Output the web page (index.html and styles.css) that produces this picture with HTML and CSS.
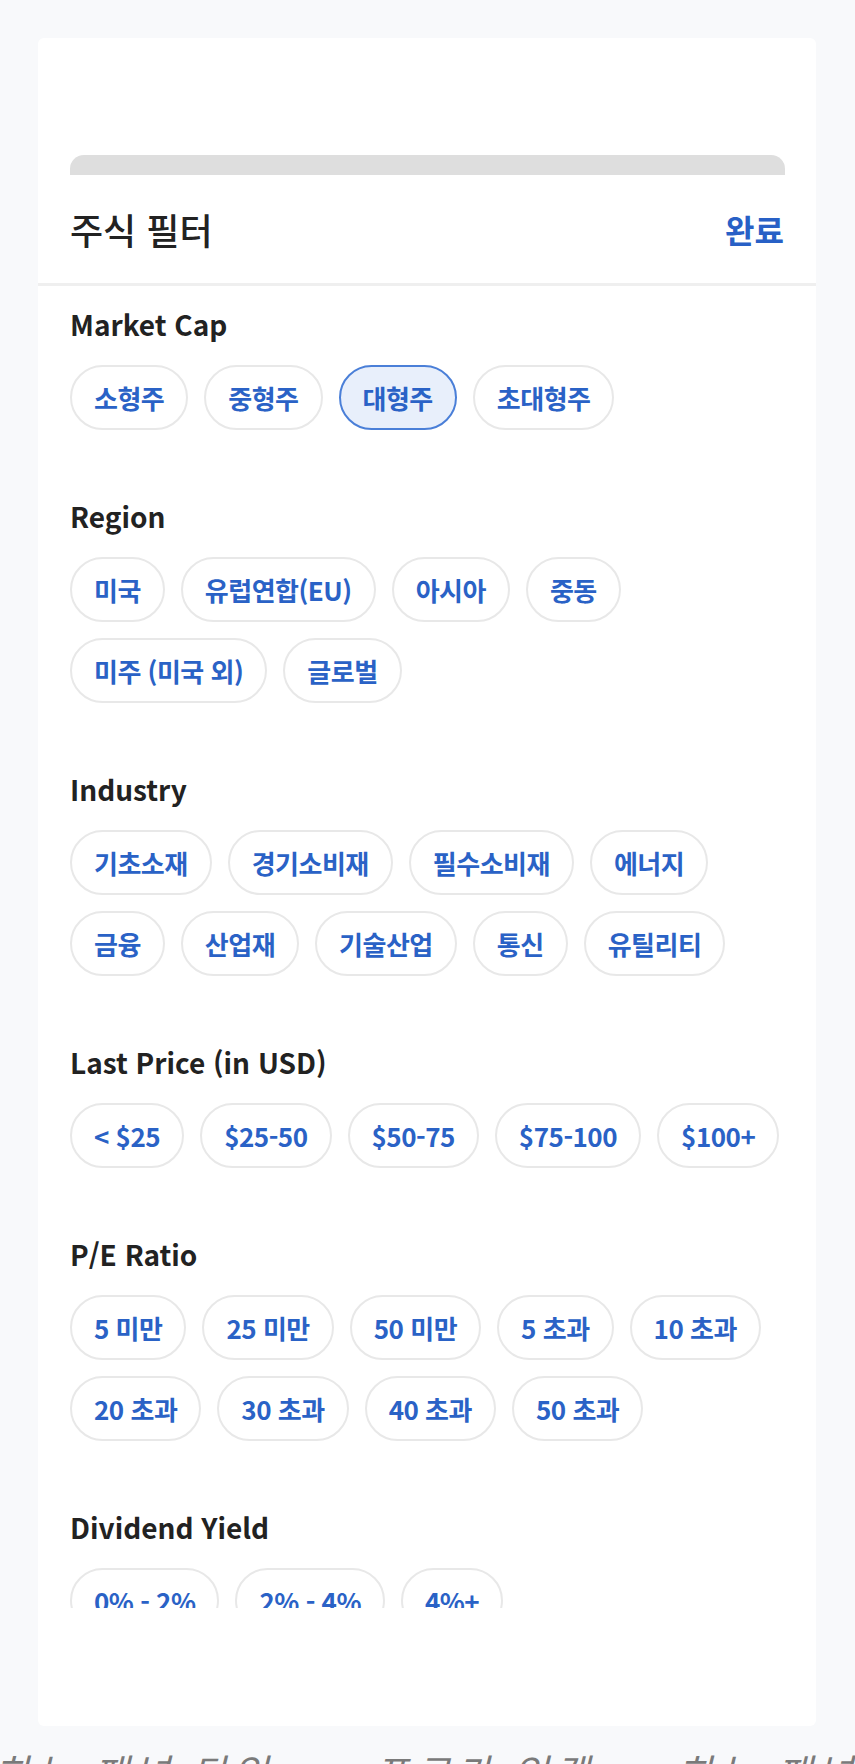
FILE: index.html
```html
<!DOCTYPE html>
<html lang="ko">
<head>
<meta charset="utf-8">
<title>주식 필터</title>
<link rel="stylesheet" href="styles.css">
</head>
<body>
<div class="card">
  <div class="handle"></div>
  <div class="header">
    <h1 class="title">주식 필터</h1>
    <span class="done">완료</span>
  </div>
  <div class="scroll">
    <section class="group">
      <h2 class="label">Market Cap</h2>
      <div class="chips">
        <span class="chip">소형주</span>
        <span class="chip">중형주</span>
        <span class="chip selected">대형주</span>
        <span class="chip">초대형주</span>
      </div>
    </section>
    <section class="group">
      <h2 class="label">Region</h2>
      <div class="chips">
        <span class="chip">미국</span>
        <span class="chip">유럽연합(EU)</span>
        <span class="chip">아시아</span>
        <span class="chip">중동</span>
        <span class="chip">미주 (미국 외)</span>
        <span class="chip">글로벌</span>
      </div>
    </section>
    <section class="group">
      <h2 class="label">Industry</h2>
      <div class="chips">
        <span class="chip">기초소재</span>
        <span class="chip">경기소비재</span>
        <span class="chip">필수소비재</span>
        <span class="chip">에너지</span>
        <span class="chip">금융</span>
        <span class="chip">산업재</span>
        <span class="chip">기술산업</span>
        <span class="chip">통신</span>
        <span class="chip">유틸리티</span>
      </div>
    </section>
    <section class="group">
      <h2 class="label">Last Price (in USD)</h2>
      <div class="chips">
        <span class="chip">&lt; $25</span>
        <span class="chip">$25-50</span>
        <span class="chip">$50-75</span>
        <span class="chip">$75-100</span>
        <span class="chip">$100+</span>
      </div>
    </section>
    <section class="group">
      <h2 class="label">P/E Ratio</h2>
      <div class="chips">
        <span class="chip">5 미만</span>
        <span class="chip">25 미만</span>
        <span class="chip">50 미만</span>
        <span class="chip">5 초과</span>
        <span class="chip">10 초과</span>
        <span class="chip">20 초과</span>
        <span class="chip">30 초과</span>
        <span class="chip">40 초과</span>
        <span class="chip">50 초과</span>
      </div>
    </section>
    <section class="group">
      <h2 class="label">Dividend Yield</h2>
      <div class="chips">
        <span class="chip">0% - 2%</span>
        <span class="chip">2% - 4%</span>
        <span class="chip">4%+</span>
      </div>
    </section>
  </div>
</div>
<p class="caption">하는 패널 타입 ..., 프로가 있겠 ... 하는 패널</p>
</body>
</html>
```

FILE: styles.css
```css
* { box-sizing: border-box; }

html, body {
  margin: 0;
  padding: 0;
}

body {
  background: #f8f9fb;
  font-family: "Noto Sans CJK KR", "Noto Sans", sans-serif;
  padding-top: 38px;
  overflow: hidden;
}

.card {
  margin: 0 39px 0 38px;
  height: 1688px;
  background: #ffffff;
  border-radius: 6px;
  padding-top: 117px;
}

.handle {
  height: 20px;
  margin: 0 31px 0 32px;
  background: #dedede;
  border-radius: 14px 14px 0 0;
}

.header {
  height: 111px;
  padding: 0 32px;
  display: flex;
  align-items: center;
  justify-content: space-between;
  border-bottom: 3px solid #efefef;
}

.title {
  margin: 0;
  font-size: 36px;
  font-weight: 500;
  color: #222222;
}

.done {
  font-size: 32px;
  font-weight: 700;
  color: #2860c6;
}

.scroll {
  height: 1322px;
  overflow: hidden;
  padding: 20px 32px 0;
}

.group {
  margin-bottom: 68px;
}

.label {
  margin: 0 0 23px;
  font-size: 28px;
  line-height: 36px;
  font-weight: 700;
  color: #222222;
}

.chips {
  display: flex;
  flex-wrap: wrap;
  gap: 16px;
}

.chip {
  display: inline-block;
  height: 65px;
  line-height: 61px;
  padding: 0 22px;
  border: 2px solid #e8e8e8;
  border-radius: 33px;
  font-size: 26px;
  font-weight: 700;
  letter-spacing: -0.5px;
  color: #2a62c6;
  background: #ffffff;
  white-space: nowrap;
}

.chip.selected {
  background: #e8effb;
  border-color: #4a7fd8;
}

.caption {
  margin: 25px 0 0 -5px;
  font-size: 38px;
  line-height: 40px;
  font-style: italic;
  letter-spacing: 6px;
  color: #7a7a7a;
  white-space: nowrap;
}
```
